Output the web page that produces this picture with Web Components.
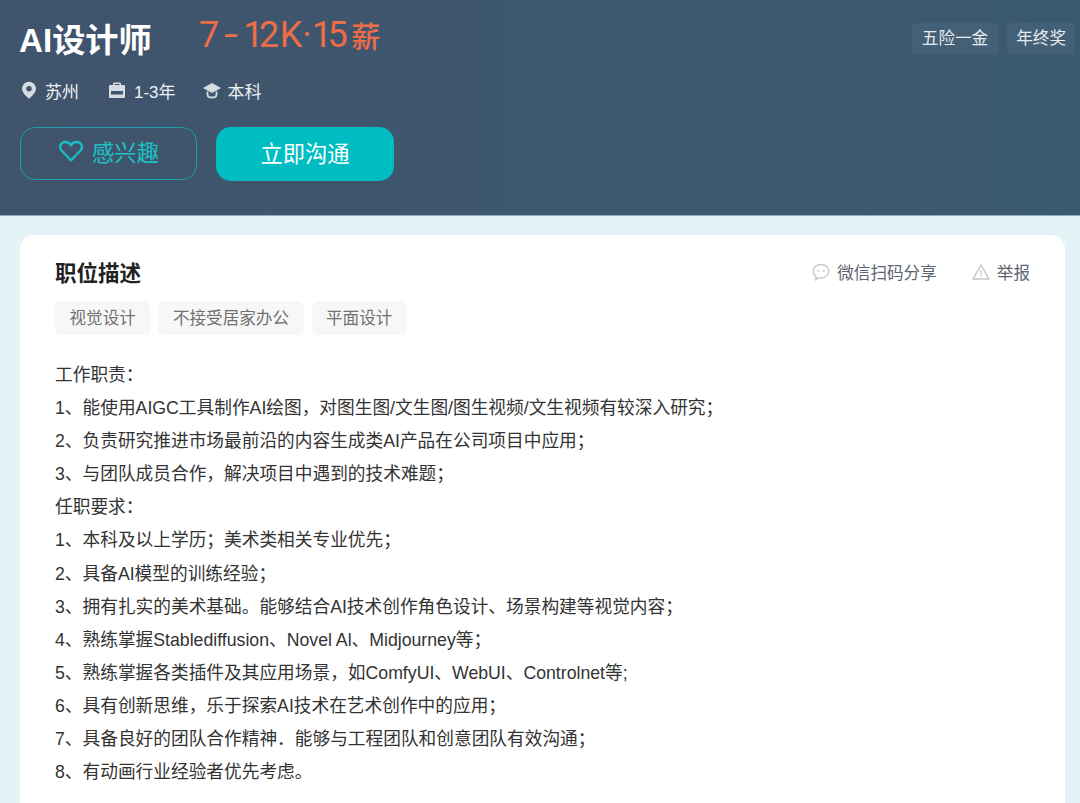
<!DOCTYPE html>
<html lang="zh">
<head>
<meta charset="utf-8">
<style>
html, body { margin: 0; height: 803px; overflow: hidden; }
body {
    background: #e3f3f6;
    font-family: "Liberation Sans", "Noto Sans CJK SC", sans-serif;
}
</style>
</head>
<body>
<job-header></job-header>
<job-card>
    <div>工作职责：</div>
    <div>1、能使用AIGC工具制作AI绘图，对图生图/文生图/图生视频/文生视频有较深入研究；</div>
    <div>2、负责研究推进市场最前沿的内容生成类AI产品在公司项目中应用；</div>
    <div>3、与团队成员合作，解决项目中遇到的技术难题；</div>
    <div>任职要求：</div>
    <div>1、本科及以上学历；美术类相关专业优先；</div>
    <div>2、具备AI模型的训练经验；</div>
    <div>3、拥有扎实的美术基础。能够结合AI技术创作角色设计、场景构建等视觉内容；</div>
    <div>4、熟练掌握Stablediffusion、Novel Al、Midjourney等；</div>
    <div>5、熟练掌握各类插件及其应用场景，如ComfyUI、WebUI、Controlnet等;</div>
    <div>6、具有创新思维，乐于探索AI技术在艺术创作中的应用；</div>
    <div>7、具备良好的团队合作精神．能够与工程团队和创意团队有效沟通；</div>
    <div>8、有动画行业经验者优先考虑。</div>
</job-card>

<script>
const headerTemplate = document.createElement("template")
headerTemplate.innerHTML = `
    <style>
    :host {
        display: flex;
        justify-content: space-between;
        height: 216px;
        padding: 0 5px 0 20px;
        box-sizing: border-box;
        background: linear-gradient(90deg, #40546c 0%, #3a5a70 100%);
        color: #fff;
        border-bottom: 1px solid #8fa9bd;
    }
    .title {
        display: flex;
        align-items: flex-start;
        height: 77px;
    }
    h1 {
        margin: 20px 0 0 -1px;
        font-size: 33.200px;
        line-height: 42px;
        font-weight: 700;
        width: 180px;
    }
    .salary {
        display: flex;
        align-items: center;
        margin-top: 14px;
        height: 42px;
        font-size: 36px;
        color: #ef6c49;
        letter-spacing: -4.500px;
        font-family: "Roboto", "Noto Sans CJK SC", sans-serif;
    }
    .salary .dash { display: inline-block; transform: scaleX(1.400); margin: 0 7px 0 11.500px; letter-spacing: 0; }
    .salary .k { margin-left: 5px; letter-spacing: 0; }
    .salary .unit { font-size: 29px; font-weight: 500; letter-spacing: 0; margin-left: 8px; }
    .meta {
        display: flex;
        align-items: center;
        height: 26px;
        font-size: 17px;
        color: #eef1f4;
    }
    .meta svg { width: 18px; height: 18px; margin-right: 7px; }
    .meta svg.bag { margin-right: 8px; }
    .meta span { margin-right: 29px; }
    .meta span.years { margin-right: 27px; }
    .actions {
        display: flex;
        gap: 19px;
        margin-top: 24px;
        margin-left: -1px;
    }
    .btn {
        width: 178px;
        height: 54px;
        box-sizing: border-box;
        border-radius: 15px;
        display: flex;
        align-items: center;
        justify-content: center;
        padding-bottom: 5px;
        font-size: 22.300px;
    }
    .like {
        margin-left: 1px;
        width: 177px;
        border: 1px solid #17a0a8;
        color: #1cc2c6;
        height: 53px;
    }
    .like svg { width: 26px; height: 24px; margin-right: 8px; }
    .chat { background: #00bdc1; color: #fff; }
    .tags {
        display: flex;
        gap: 9px;
        margin-top: 23px;
        align-self: flex-start;
    }
    .tags span {
        height: 32px;
        line-height: 32px;
        padding: 0 10px;
        font-size: 16.600px;
        color: #e6ecf0;
        background: #436076;
        border-radius: 4px;
    }
    .tags span:last-child { padding: 0 9px; }
    </style>
    <div>
        <div class="title">
            <h1>AI设计师</h1>
            <div class="salary">7<span class="dash">-</span>12<span class="k">K·</span>15<span class="unit">薪</span></div>
        </div>
        <div class="meta">
            <svg viewBox="0 0 18 18"><path fill="#d5dce2" fill-rule="evenodd" d="M9 .8A7 7 0 0 0 2 7.800C2 12.300 9 17.800 9 17.800s7-5.500 7-10A7 7 0 0 0 9 .8zm0 9.700a2.700 2.700 0 1 1 0-5.400 2.700 2.700 0 0 1 0 5.400z"/></svg>
            <span>苏州</span>
            <svg class="bag" viewBox="0 0 18 18"><path fill="#d5dce2" fill-rule="evenodd" d="M6 1.500h6a1 1 0 0 1 1 1V4h3a1 1 0 0 1 1 1v11a1 1 0 0 1-1 1H2a1 1 0 0 1-1-1V5a1 1 0 0 1 1-1h3V2.500a1 1 0 0 1 1-1zM6.500 3v1h5V3zM3 10v3.500h12V10z"/></svg>
            <span class="years">1-3年</span>
            <svg viewBox="0 0 18 18"><path fill="#d5dce2" d="M9 2L0 7l9 5 9-5z"/><path fill="none" stroke="#d5dce2" stroke-width="1.800" d="M4.500 10.500v3c0 1.800 2 3 4.500 3s4.500-1.200 4.500-3v-3"/></svg>
            <span>本科</span>
        </div>
        <div class="actions">
            <div class="btn like">
                <svg viewBox="0 0 26 24"><path fill="none" stroke="#19bcc2" stroke-width="2.400" stroke-linejoin="round" d="M13 21.500L3.500 11.500C1 8.800 1.800 3.500 7 3c2.800-.2 4.800 1.300 6 3.500C14.200 4.300 16.200 2.800 19 3c5.200.5 6 5.800 3.500 8.500z"/></svg>
                感兴趣
            </div>
            <div class="btn chat">立即沟通</div>
        </div>
    </div>
    <div class="tags"><span>五险一金</span><span>年终奖</span></div>
`

class JobHeader extends HTMLElement {
    constructor() {
        super()
        this.attachShadow({mode: "open"})
        this.shadowRoot.append(headerTemplate.content.cloneNode(true))
    }
}

const cardTemplate = document.createElement("template")
cardTemplate.innerHTML = `
    <style>
    :host {
        display: block;
        margin: 19px 15px 0 20px;
        padding: 20px 35px 0;
        height: 548px;
        background: #fff;
        border-radius: 14px 14px 0 0;
        color: #333;
    }
    .top {
        display: flex;
        justify-content: space-between;
        align-items: center;
        height: 36px;
    }
    h2 {
        margin: -3px 0 0;
        font-size: 21.500px;
        font-weight: 700;
        color: #222;
    }
    .links {
        display: flex;
        align-items: center;
        margin-top: -2px;
        font-size: 16.600px;
        color: #5d6470;
    }
    .links svg { width: 18px; height: 18px; margin-right: 7px; }
    .links span + svg { margin-left: 35px; }
    .skills {
        display: flex;
        gap: 8px;
        margin-top: 10px;
    }
    .skills span {
        height: 34px;
        line-height: 36px;
        padding: 0 14.500px;
        font-size: 16.600px;
        color: #717171;
        background: #f7f7f7;
        border-radius: 6px;
    }
    .desc {
        margin-top: 24px;
        font-size: 17.700px;
        line-height: 33.100px;
    }
    </style>
    <div class="top">
        <h2>职位描述</h2>
        <div class="links">
            <svg viewBox="0 0 18 18"><path fill="none" stroke="#c9cdd1" stroke-width="1.500" d="M9 1.500c4.300 0 7.800 2.900 7.800 6.700s-3.500 6.700-7.800 6.700c-.8 0-1.600-.1-2.300-.3L3.800 16.700v-3.300C2.200 12.200 1.200 10.300 1.200 8.200 1.200 4.400 4.700 1.500 9 1.500z"/><circle cx="6.200" cy="8" r="1.100" fill="#c9cdd1"/><circle cx="11.800" cy="8" r="1.100" fill="#c9cdd1"/></svg>
            <span>微信扫码分享</span>
            <svg viewBox="0 0 18 18"><path fill="none" stroke="#c4c8cc" stroke-width="1.500" stroke-linejoin="round" d="M9 2L1 16h16z"/><path fill="#c4c8cc" d="M8.300 7h1.400l-.2 4.800h-1zM8.300 12.600h1.400v1.400H8.300z"/></svg>
            <span>举报</span>
        </div>
    </div>
    <div class="skills"><span>视觉设计</span><span>不接受居家办公</span><span>平面设计</span></div>
    <div class="desc"><slot></slot></div>
`

class JobCard extends HTMLElement {
    constructor() {
        super()
        this.attachShadow({mode: "open"})
        this.shadowRoot.append(cardTemplate.content.cloneNode(true))
    }
}

window.customElements.define("job-header", JobHeader)
window.customElements.define("job-card", JobCard)
</script>
</body>
</html>
